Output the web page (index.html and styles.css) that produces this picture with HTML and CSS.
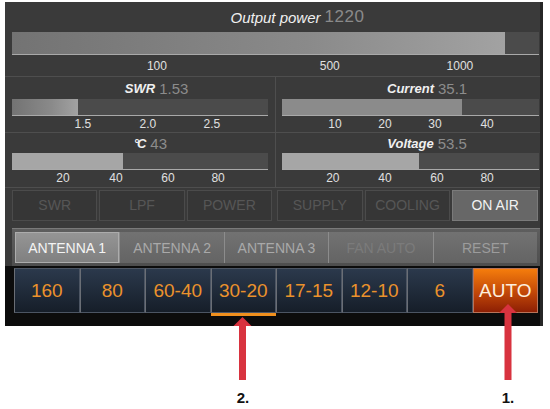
FILE: index.html
```html
<!DOCTYPE html>
<html lang="en">
<head>
    <meta charset="UTF-8">
    <meta name="viewport" content="width=device-width, initial-scale=1.0">
    <title>Amplifier panel</title>
    <link rel="stylesheet" href="styles.css">
</head>
<body>
    <div class="panel">
        <!-- Output power -->
        <section class="meters meters-top">
            <div class="meter meter-big">
                <div class="meter-title"><span></span><span class="label">Output power</span><span class="value">1220</span></div>
                <div class="track"><div class="fill fill-grad" style="width: 93.5%"></div></div>
                <div class="scale">
                    <span style="left: 27.5%">100</span>
                    <span style="left: 60.3%">500</span>
                    <span style="left: 85%">1000</span>
                </div>
            </div>
        </section>

        <section class="meters meter-row row-two">
            <div class="meter">
                <div class="meter-title"><span></span><span class="label">SWR</span><span class="value">1.53</span></div>
                <div class="track"><div class="fill fill-grad" style="width: 25.8%"></div></div>
                <div class="scale">
                    <span style="left: 27.7%">1.5</span>
                    <span style="left: 53.1%">2.0</span>
                    <span style="left: 78.1%">2.5</span>
                </div>
            </div>
            <div class="meter meter-right">
                <div class="meter-title"><span></span><span class="label">Current</span><span class="value">35.1</span></div>
                <div class="track"><div class="fill" style="width: 70%"></div></div>
                <div class="scale">
                    <span style="left: 20.6%">10</span>
                    <span style="left: 40.1%">20</span>
                    <span style="left: 59.5%">30</span>
                    <span style="left: 79.8%">40</span>
                </div>
            </div>
        </section>

        <section class="meters meter-row row-three">
            <div class="meter">
                <div class="meter-title"><span></span><span class="label degrees">°C</span><span class="value">43</span></div>
                <div class="track"><div class="fill fill-light" style="width: 43.4%"></div></div>
                <div class="scale">
                    <span style="left: 19.9%">20</span>
                    <span style="left: 40.6%">40</span>
                    <span style="left: 60.9%">60</span>
                    <span style="left: 80.5%">80</span>
                </div>
            </div>
            <div class="meter meter-right">
                <div class="meter-title"><span></span><span class="label">Voltage</span><span class="value">53.5</span></div>
                <div class="track"><div class="fill fill-light" style="width: 53.3%"></div></div>
                <div class="scale">
                    <span style="left: 19.8%">20</span>
                    <span style="left: 40.1%">40</span>
                    <span style="left: 60.3%">60</span>
                    <span style="left: 79.8%">80</span>
                </div>
            </div>
        </section>

        <!-- Status indicators -->
        <section class="status">
            <div class="status-group">
                <div class="status-cell">SWR</div>
                <div class="status-cell">LPF</div>
                <div class="status-cell">POWER</div>
            </div>
            <div class="status-group">
                <div class="status-cell">SUPPLY</div>
                <div class="status-cell">COOLING</div>
                <div class="status-cell on">ON AIR</div>
            </div>
        </section>

        <!-- Antenna selection -->
        <section class="antennas">
            <button class="ant active">ANTENNA 1</button>
            <button class="ant">ANTENNA 2</button>
            <button class="ant">ANTENNA 3</button>
            <button class="ant dim">FAN AUTO</button>
            <button class="ant reset">RESET</button>
        </section>

        <!-- Bands -->
        <section class="bands">
            <button class="band">160</button>
            <button class="band">80</button>
            <button class="band">60-40</button>
            <button class="band current">30-20</button>
            <button class="band">17-15</button>
            <button class="band">12-10</button>
            <button class="band">6</button>
            <button class="band auto">AUTO</button>
        </section>
    </div>

    <!-- Annotation arrows -->
    <svg class="notes" width="550" height="409" viewBox="0 0 550 409">
        <rect x="239" y="325" width="7" height="55" fill="#d8333f"/>
        <polygon points="242.5,317 251.5,326 233.5,326" fill="#d8333f"/>
        <rect x="504.5" y="312" width="7" height="68" fill="#d8333f"/>
        <polygon points="508,304 517,313 499,313" fill="#d8333f"/>
        <text x="243" y="403" text-anchor="middle">2.</text>
        <text x="508" y="403" text-anchor="middle">1.</text>
    </svg>
</body>
</html>
```

FILE: styles.css
```css
body {
    margin: 0;
    background: #fff;
    font-family: 'Liberation Sans', Arial, sans-serif;
    position: relative;
    width: 550px;
    height: 409px;
    overflow: hidden;
}

.panel {
    margin: 2px 0 0 5px;
    width: 535px;
    height: 324px;
    background: #3a3a3a;
    border-right: 3px solid #262626;
    display: flex;
    flex-direction: column;
}

/* meters */
.meters {
    padding: 0 1px 0 7px;
    border-bottom: 1px solid #4e4e4e;
    box-sizing: border-box;
}

.meters-top {
    height: 75px;
}

.meter-row {
    display: grid;
    grid-template-columns: 263px 1fr;
}

.row-two {
    height: 56px;
}

.row-three {
    height: 55px;
}

.meter-row .meter:first-child {
    margin-right: 7px;
}

.meter-right {
    border-left: 1px solid #4e4e4e;
    padding-left: 6px;
}

.meter-title {
    display: grid;
    grid-template-columns: 1fr auto 1fr;
    align-items: center;
    height: 22px;
    white-space: nowrap;
}

.meter-big .meter-title {
    height: 30px;
}

.row-three .meter-title {
    height: 20px;
}

.label {
    font-style: italic;
    font-weight: bold;
    font-size: 13px;
    color: #f0f0f0;
}

.meter-big .label {
    font-weight: normal;
    font-size: 15px;
}

.degrees {
    letter-spacing: -2px;
    padding-right: 2px;
}

.value {
    margin-left: 4px;
    font-size: 15px;
    color: #8c8c8c;
}

.meter-big .value {
    font-size: 17px;
    letter-spacing: 0.5px;
    color: #8a8a8a;
}

.track {
    height: 16px;
    background: #4b4b4b;
    border-bottom: 1px solid #a9a9a9;
}

.meter-big .track {
    height: 22px;
}

.fill {
    height: 100%;
    background: #8b8b8b;
}

.fill-grad {
    background: linear-gradient(to right, #737373, #8a8a8a 60%, #a2a2a2);
}

.fill-light {
    background: #a6a6a6;
}

.scale {
    position: relative;
    height: 15px;
    font-size: 12px;
    color: #e0e0e0;
}

.meter-big .scale {
    height: 21px;
}

.scale span {
    position: absolute;
    top: 50%;
    transform: translate(-50%, -50%);
}

/* status */
.status {
    display: flex;
    gap: 5px;
    padding: 2px 1px 0 7px;
}

.status-group {
    display: grid;
    grid-template-columns: repeat(3, 1fr);
    gap: 2px;
    width: 260px;
}

.status-group + .status-group {
    width: 261px;
}

.status-cell {
    height: 29px;
    line-height: 29px;
    text-align: center;
    font-size: 14px;
    color: #565656;
    background: #363636;
    border: 1px solid #4b4b4b;
}

.status-cell.on {
    background: #676767;
    border-color: #7a7a7a;
    color: #f2f2f2;
}

/* antennas */
.antennas {
    display: grid;
    grid-template-columns: repeat(5, 1fr);
    margin: 7px 0 0 7px;
    padding: 3px;
    height: 38px;
    box-sizing: border-box;
    background: linear-gradient(#5e5e5e, #4e4e4e);
    border-top: 1px solid #7a7a7a;
}

.ant {
    font-family: inherit;
    font-size: 14px;
    color: #a9a9a9;
    background: linear-gradient(#727272, #646464);
    border: none;
    border-left: 1px solid #8c8c8c;
    padding: 0;
}

.ant.active {
    background: linear-gradient(#959595, #808080);
    border: 1px solid #acacac;
    color: #f4f4f4;
}

.ant.dim {
    color: #7b7b7b;
}

.ant.reset {
    color: #9c9c9c;
}

/* bands */
.bands {
    flex: 1;
    display: grid;
    grid-template-columns: repeat(8, 1fr);
    background: #0c0c0c;
    padding: 2px 2px 13px 9px;
}

.band {
    font-family: inherit;
    font-size: 19px;
    color: #eb922c;
    background: linear-gradient(#2b394c, #161e29);
    border: 1px solid #4c5563;
    border-left-color: #6a6e75;
    padding: 0;
}

.band.current {
    box-shadow: 0 3px 0 #f0901e;
}

.band.auto {
    color: #fdeedd;
    background: linear-gradient(#f57d0c, #c14708 55%, #8d1f04);
    border-color: #b8745a;
}

/* annotation overlay */
.notes {
    position: absolute;
    top: 0;
    left: 0;
    pointer-events: none;
}

.notes text {
    font-family: 'Liberation Sans', Arial, sans-serif;
    font-weight: bold;
    font-size: 15px;
    fill: #111;
}
```
